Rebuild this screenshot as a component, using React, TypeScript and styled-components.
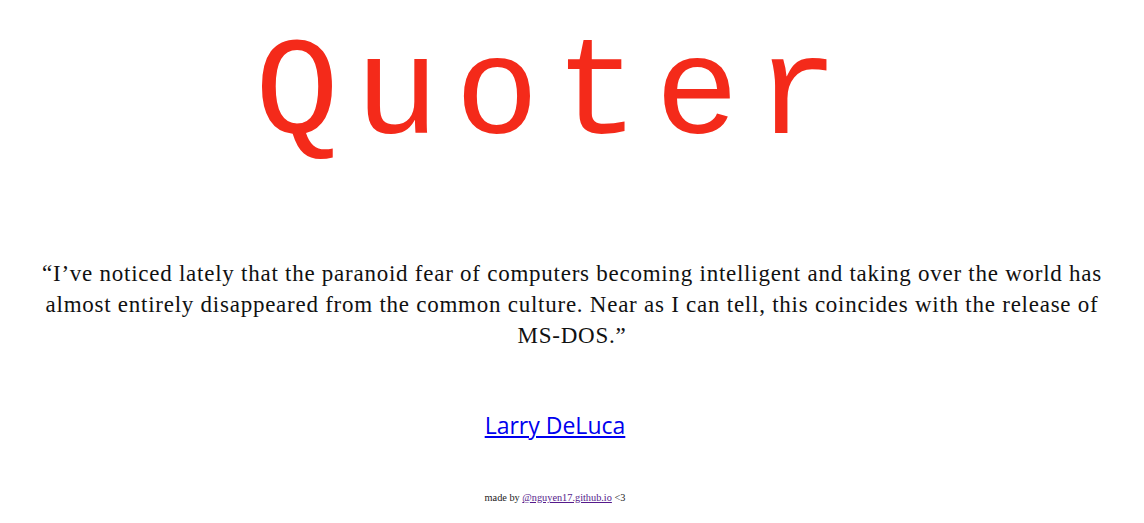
import React from "react";
import styled, { createGlobalStyle } from "styled-components";

const Global = createGlobalStyle`
  html, body { margin: 0; padding: 0; background: #ffffff; }
  body { font-family: "Liberation Serif", serif; }
`;

const Page = styled.main`
  display: flex;
  flex-direction: column;
  align-items: center;
  padding: 0 24px;
`;

const Title = styled.h1`
  margin: 5px 34px 0 0;
  font-family: "Liberation Mono", "Courier New", monospace;
  font-weight: 400;
  font-size: 140px;
  letter-spacing: 16px;
  line-height: 181px;
  color: #f42a1a;
  text-align: center;
`;

const Quote = styled.p`
  margin: 72px 0 0;
  font-family: "Liberation Serif", serif;
  font-size: 23px;
  letter-spacing: 0.75px;
  line-height: 31px;
  color: #111111;
  text-align: center;
`;

const NoWrap = styled.span`
  white-space: nowrap;
`;

const Author = styled.a`
  margin: 58px 34px 0 0;
  font-family: "Open Sans", sans-serif;
  font-size: 23px;
  line-height: 33px;
  color: #0000ee;
  text-decoration: underline;
`;

const Footer = styled.footer`
  margin: 49px 34px 0 0;
  font-family: "Liberation Serif", serif;
  font-size: 10.3px;
  line-height: 13px;
  color: #222222;
`;

const FooterLink = styled.a`
  color: #551a8b;
  text-decoration: underline;
`;

export default function App() {
  return (
    <>
      <Global />
      <Page>
        <Title>Quoter</Title>
        <Quote>
          “I’ve noticed lately that the paranoid fear of computers becoming intelligent and taking over the world has almost entirely disappeared from the common culture. Near as I can tell, this coincides with the release of <NoWrap>MS-DOS.”</NoWrap>
        </Quote>
        <Author href="#">Larry DeLuca</Author>
        <Footer>
          made by <FooterLink href="#">@nguyen17.github.io</FooterLink> &lt;3
        </Footer>
      </Page>
    </>
  );
}
